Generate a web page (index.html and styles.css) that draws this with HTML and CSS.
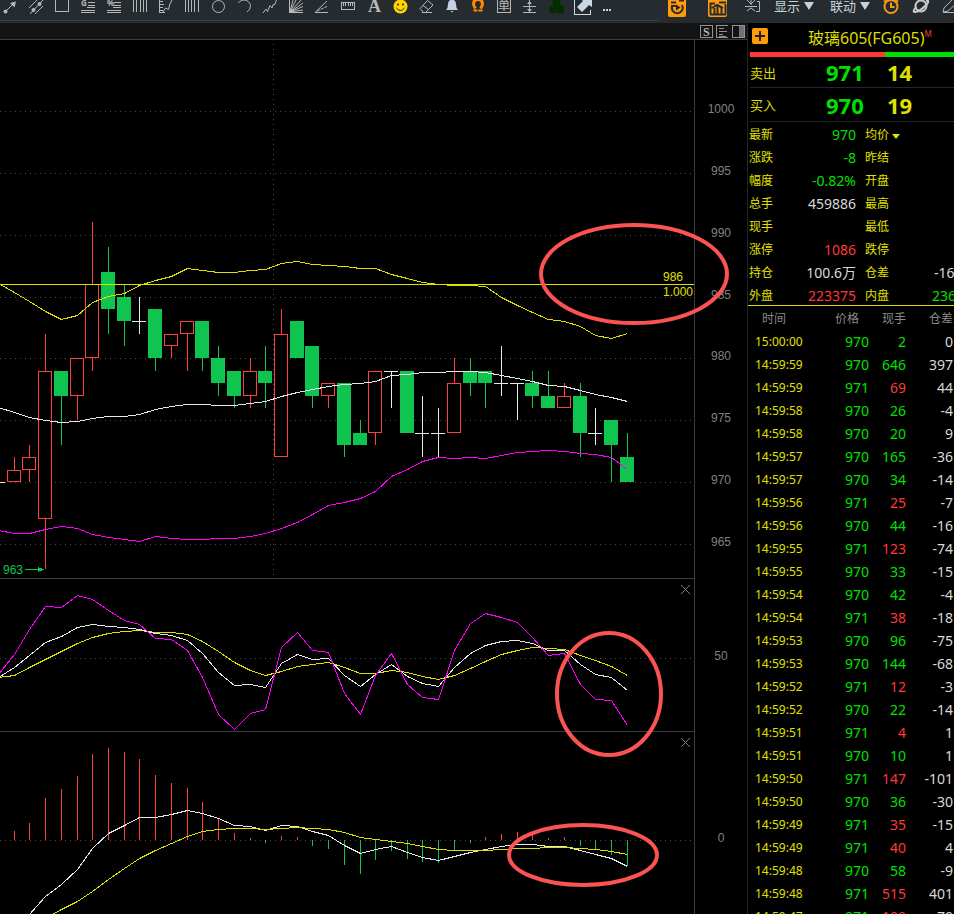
FILE: index.html
```html
<!DOCTYPE html>
<html lang="zh-CN">
<head>
  <meta charset="UTF-8" />
  <meta name="viewport" content="width=device-width, initial-scale=1" />
  <title>玻璃605 (FG605)</title>
  <link rel="stylesheet" href="styles.css">
</head>
<body>

<header class="toolbar">
  <div class="draw-tools">
    <button aria-label="箭头"><svg><circle cx="5.5" cy="14.5" r="2" class="fill"/><path d="M5 15L13 7"/><path d="M16 4.5L14.5 10.5L10 6z" class="fill"/></svg></button>
    <button aria-label="平行线"><svg><path d="M3 11L11 3M4 17L17 3M9 17L17 9"/><circle cx="7.5" cy="13" r="2" class="fill"/><circle cx="13.5" cy="7" r="2" class="fill"/></svg></button>
    <button aria-label="矩形"><svg class="crisp"><rect x="3.5" y="2.5" width="13" height="12"/></svg></button>
    <button aria-label="黄金分割"><svg class="crisp"><path d="M10 5.5h7M10 8.5h7M9 10.5h8M3 13.5h14M3 15.5h14"/><text x="3" y="9" class="tiny">G</text></svg></button>
    <button aria-label="百分比"><svg class="crisp"><path d="M10 5.5h7M10 8.5h7M9 10.5h8M3 13.5h14M3 15.5h14"/><text x="3" y="9" class="tiny">%</text></svg></button>
    <button aria-label="周期线"><svg class="crisp"><path d="M3.5 2v13M6.5 2v13M10.5 2v13M13.5 2v13M16.5 2v13"/></svg></button>
    <button aria-label="测量"><svg><path class="crisp" d="M3.5 2v13.5h5M4 4.5h3M4 7.5h4M4 10.5h3M4 13.5h3"/><path d="M7 15L9.5 11L12.5 12.5L13.5 8L16 3"/></svg></button>
    <button aria-label="斐波那契"><svg class="crisp"><path d="M3.5 2v13M6.5 2v13M9.5 2v13M12.5 2v13M16.5 2v13"/></svg></button>
    <button aria-label="圆"><svg><circle cx="10.5" cy="9.5" r="6"/></svg></button>
    <button aria-label="圆弧"><svg><path d="M4 6C8 1.5 15 2 16.5 8.5Q16.5 13 13 15"/></svg></button>
    <button aria-label="波浪线"><svg><path d="M3 16L6 12L7.5 14.5L10 8.5L12 11L13.5 7L14.5 8L16.5 3"/></svg></button>
    <button aria-label="江恩角度"><svg><path d="M3.5 2v13.500H17M4 15L7 3M4 15L10 3M4 15L15 3M4 15L17 6M4 15L17 9.5M4 15L17 13"/><path d="M3 16v-6l6 6z" class="fill"/></svg></button>
    <button aria-label="速阻线"><svg><path d="M3 15.5h13M3 15.5L15 4"/><path d="M5 14L16 9" stroke-dasharray="3 1"/></svg></button>
    <button aria-label="标尺"><svg class="crisp"><path d="M3.5 5.5h13v7h-13zM5.5 6v3M7.5 6v3M10.5 6v3M12.5 6v3M14.5 6v3"/></svg></button>
    <button aria-label="文字"><svg><text x="4" y="15" class="letter">A</text></svg></button>
    <button aria-label="表情"><svg><circle cx="10.5" cy="9.5" r="7" class="smile"/><circle cx="8" cy="7.5" r="1" class="dark"/><circle cx="13" cy="7.5" r="1" class="dark"/><path d="M6.5 11Q10.5 16 14.500 11" class="mouth"/></svg></button>
    <button aria-label="橡皮"><svg><path d="M4 11.5L11.500 3.500L17 8L9.500 15.500H7.500zM7 8.500L12.500 12.500M6 15.500h10"/></svg></button>
    <button aria-label="提醒"><svg><path class="bell" d="M4 13Q6 11 6 7Q6 3 10 2.500Q14 3 14 7Q14 11 16 13zM8.500 14h3l-1.500 1.500z"/></svg></button>
    <button aria-label="磁铁"><svg><path class="magnet" d="M7.500 11.500Q5.500 9 5.500 6.500Q6 2.500 10 2.500Q14 2.500 14.500 6.500Q14.500 9 12.500 11.500"/><path d="M5.500 13.500h4M10.500 13.500h4" class="magnet foot"/></svg></button>
    <button aria-label="画线下单"><svg><path class="crisp" d="M3.500 0v15.500h13V0"/><text x="4" y="13" class="cjk">单</text></svg></button>
    <button aria-label="水平线"><svg><path class="crisp" d="M3 9.500h13M3 15.500h13M9.500 3v12"/><path d="M7 7h5l-2.500-3zM7 12h5l-2.500 3z" class="fill"/></svg></button>
    <button aria-label="指标"><svg class="clover"><circle cx="10.500" cy="6" r="4"/><circle cx="7" cy="12.500" r="4"/><circle cx="14.500" cy="12.500" r="4"/></svg></button>
    <button aria-label="展开"><svg class="expand"><path class="crisp" d="M2.500 0v17.500h16v-5"/><path class="solid" d="M5 10L11 4L9 2H20V10L17 8L10 15z"/></svg></button>
    <button aria-label="更多"><svg><path class="more" d="M5 13h2M8 13h2M11 13h2"/></svg></button>
  </div>
  <div class="view-tools">
    <button class="boxed" aria-label="回放"><svg><rect x="0" y="0" width="18" height="20" rx="2" class="orange"/><path d="M3 5.500h5M11 3.500h5" class="ink"/><path d="M4 9A5.500 5.500 0 1 0 14 8M4 13v-4h4" class="ink"/><path d="M8 7.500L12.500 10.500L8 13.500z" class="dark"/></svg></button>
    <button class="boxed" aria-label="统计"><svg><rect x="2" y="0" width="19" height="20" rx="2" class="orange"/><path d="M4.500 17.500V6.500H9M13 5.500h7M19.500 17.500V7M8.500 17V11M11.500 17V9M15.500 17V11M4 17.500h16M6 11L11 8L17 11" class="ink"/></svg></button>
    <button aria-label="分栏"><svg><path d="M2 2l5 5l5-5M7 2v6M1 9.500h12M3 14l4-3l4 3M13 4.500h2.500v10H12"/></svg></button>
    <button class="menu">显示<span class="caret"></span></button>
    <button class="menu">联动<span class="caret"></span></button>
    <button aria-label="闹钟"><svg class="clock"><circle cx="9" cy="9.500" r="6.500"/><path d="M9 5.500V10h3.500M2 5l3-3M13 2l3 3"/></svg></button>
    <button aria-label="星球"><svg class="planet"><circle cx="9" cy="9" r="5.500"/><path d="M4 10Q0 15 3 15Q9 14 15 7Q18 3 14 4"/></svg></button>
    <button aria-label="编辑"><svg><path d="M1 15l1-4L11 2l4 4l-9 8zM1 15.500h14"/></svg></button>
  </div>
</header>

<main>
  <section class="charts">
    <div class="tabs">
      <button aria-label="S"><svg class="crisp"><rect x=".5" y=".5" width="12" height="12"/><text x="3" y="11" class="serif">S</text></svg></button>
      <button aria-label="列表"><svg class="crisp"><path d="M12 .5H.5v12H12M3 3.500h5M3 6.500h8M3 9.500h4M3 11.500h7"/></svg></button>
      <button aria-label="侧栏"><svg class="crisp"><rect x=".5" y=".5" width="12" height="12"/><rect x="7" y="1" width="5" height="11" class="fill"/></svg></button>
    </div>

    <div class="panels">
      <div class="panel price">
        <svg class="plot" id="price"></svg>
        <svg class="axis" id="priceAxis"></svg>
      </div>
      <div class="panel kdj">
        <svg class="plot" id="kdj"></svg>
        <svg class="axis"><text x="50%" y="81">50</text></svg>
        <button class="close" aria-label="关闭"><svg><path d="M0 0L9 9M9 0L0 9"/></svg></button>
      </div>
      <div class="panel macd">
        <svg class="plot" id="macd"></svg>
        <svg class="axis"><text x="50%" y="110">0</text></svg>
        <button class="close" aria-label="关闭"><svg><path d="M0 0L9 9M9 0L0 9"/></svg></button>
      </div>
      <svg class="marks">
        <ellipse cx="634" cy="234" rx="93" ry="49"/>
        <ellipse cx="609" cy="654" rx="52" ry="61"/>
        <ellipse cx="583" cy="815" rx="74" ry="30"/>
      </svg>
    </div>
  </section>

  <aside class="quote">
    <div class="title">
      <button class="add" aria-label="添加"><svg><path d="M8 3v10M3 8h10"/></svg></button>
      <h1>玻璃605(FG605)</h1><sup>M</sup>
    </div>
    <div class="ratio"><span></span></div>
    <div class="deal"><span>卖出</span><b>971</b><b class="lots">14</b></div>
    <div class="deal buy"><span>买入</span><b>970</b><b class="lots">19</b></div>

    <table class="stats">
      <tr><th>最新</th><td class="dn">970</td><th>均价<span class="caret"></span></th><td></td></tr>
      <tr><th>涨跌</th><td class="dn">-8</td><th>昨结</th><td></td></tr>
      <tr><th>幅度</th><td class="dn">-0.82%</td><th>开盘</th><td></td></tr>
      <tr><th>总手</th><td>459886</td><th>最高</th><td></td></tr>
      <tr><th>现手</th><td></td><th>最低</th><td></td></tr>
      <tr><th>涨停</th><td class="up">1086</td><th>跌停</th><td></td></tr>
      <tr><th>持仓</th><td>100.6万</th><th>仓差</th><td class="net">-16</td></tr>
      <tr><th>外盘</th><td class="up">223375</td><th>内盘</th><td class="dn">236</td></tr>
    </table>

    <table class="ticks">
      <thead>
        <tr><th>时间</th><th>价格</th><th>现手</th><th>仓差</th></tr>
      </thead>
      <tbody id="ticks"></tbody>
    </table>
  </aside>
</main>

<script src="chart.js"></script>
</body>
</html>
```
FILE: styles.css
```css
* { box-sizing: border-box; }
body {
  margin: 0;
  height: 100vh;
  display: flex;
  flex-direction: column;
  overflow: hidden;
  background: #000;
  color: #d8d8d8;
  font-family: "Noto Sans", "Noto Sans CJK SC", sans-serif;
  font-size: 14px;
}
button {
  padding: 0;
  border: 0;
  background: none;
  color: inherit;
  font: inherit;
  flex: none;
}
button svg {
  display: block;
  width: 18px;
  height: 18px;
  overflow: visible;
  fill: none;
  stroke: #b4b8ba;
}
svg .fill { fill: #b4b8ba; stroke: none; }
.crisp { shape-rendering: crispEdges; }
svg text { stroke: none; fill: #b4b8ba; }

/* toolbar */
.toolbar {
  flex: none;
  height: 23px;
  display: flex;
  align-items: flex-start;
  background: #262b2f;
  overflow: hidden;
}
.draw-tools {
  flex: 1;
  height: 21px;
  padding-bottom: 8px;
  margin-left: -4px;
  border-bottom: 1px solid #3a4147;
  display: flex;
  align-items: center;
}
.draw-tools button {
  width: 26px;
  display: flex;
  justify-content: center;
}
.view-tools {
  flex: none;
  width: 295px;
  height: 12px;
  padding-left: 9px;
  display: flex;
  align-items: center;
  gap: 12px;
}
.boxed { margin-right: 8px; }
.menu {
  width: 40px;
  display: flex;
  align-items: center;
  justify-content: space-between;
  line-height: 18px;
  font-size: 13px;
  color: #c4d4da;
}
.menu + .menu { margin-left: 4px; }
.caret {
  border: 5px solid transparent;
  border-top: 8px solid #c4d4da;
  border-bottom: 0;
}
.tiny { font-size: 8px; font-weight: bold; }
.letter { font: bold 18px "Liberation Serif", serif; }
.cjk { font-size: 12px; }
.serif { font: bold 12px "Liberation Serif", serif; }
.smile { fill: #ffd400; stroke: none; }
.dark { fill: #222; stroke: none; }
.mouth { stroke: #222; }
.bell { fill: #c4cfe4; stroke: none; }
.magnet { stroke: #ff8c00; stroke-width: 3; }
.magnet.foot { stroke-width: 2; }
.clover { fill: #032c03; stroke: none; }
.expand { stroke: #c8d8e4; }
.solid { fill: #c8d8e4; stroke: none; }
.more { stroke: #c4d4ec; stroke-width: 2; }
.orange { fill: #ff9c0c; stroke: none; }
.ink { stroke: #2a2d30; stroke-width: 2; }
.clock { stroke: #f09a1c; stroke-width: 2; }
.planet { stroke: #c8cccf; stroke-width: 2; }

main {
  flex: 1;
  min-height: 0;
  display: flex;
}

/* charts */
.charts {
  flex: 1;
  min-width: 0;
  display: flex;
  flex-direction: column;
}
.tabs {
  flex: none;
  height: 17px;
  padding: 1px 2px 0 0;
  display: flex;
  justify-content: flex-end;
  gap: 3px;
  background: #141414;
  border-bottom: 1px solid #3a3c3e;
}
.tabs svg {
  width: 13px;
  height: 13px;
  stroke: #909294;
}
.tabs .fill { fill: #707274; }
.panels {
  flex: 1;
  position: relative;
  display: flex;
  flex-direction: column;
  overflow: hidden;
}
.panel {
  flex: none;
  position: relative;
  display: grid;
  grid-template-columns: 1fr 52px;
}
.price { height: 539px; }
.kdj { height: 153px; }
.macd { flex: 1; }
.plot {
  width: 100%;
  height: 100%;
  border-right: 1px solid #3a3e44;
  border-bottom: 1px solid #3a3e44;
  fill: none;
  shape-rendering: crispEdges;
}
.macd .plot { border-bottom: 0; }
.axis { width: 100%; height: 100%; }
.axis text {
  text-anchor: middle;
  fill: #808080;
}
.axis text, .plot text { font: 12px "Liberation Sans", sans-serif; }
.plot .grid { stroke: #484848; stroke-dasharray: 1 4; }
.red { stroke: #ff4040; }
.green { stroke: #10c450; }
.body-dn { fill: #10c450; }
.body-up { fill: #000; stroke: #ff4040; }
.white { stroke: #e8e8e8; }
.yellow { stroke: #e0e000; }
.magenta { stroke: #ff00ff; }
.plot .t-yellow { fill: #e0e000; }
.plot .t-green { fill: #10c450; }
.close {
  position: absolute;
  top: 6px;
  right: 57px;
}
.close svg { width: 9px; height: 9px; stroke: #808080; }
.marks {
  position: absolute;
  inset: 0;
  width: 100%;
  height: 100%;
  pointer-events: none;
}
.marks ellipse { fill: none; stroke: #fb5252; stroke-width: 4; }

/* quote */
.quote {
  flex: none;
  width: 207px;
  border-left: 1px solid #24242e;
  overflow: hidden;
}
.title {
  height: 29px;
  padding-left: 4px;
  display: flex;
  align-items: center;
}
.add {
  margin-bottom: 3px;
  border-radius: 2px;
  background: #ff9c0c;
}
.add svg { width: 16px; height: 16px; stroke: #222; stroke-width: 2; }
.title h1 {
  margin: 0 0 0 40px;
  font-size: 16px;
  font-weight: normal;
  line-height: 24px;
  color: #dcdc00;
}
.title sup {
  align-self: flex-start;
  margin-top: 6px;
  font-size: 8px;
  line-height: 10px;
  color: #ff3838;
}
.ratio {
  height: 5px;
  margin-left: 2px;
  background: #00e000;
}
.ratio span {
  display: block;
  width: 66%;
  height: 5px;
  background: #ff3838;
}
.deal {
  height: 31px;
  margin-left: 2px;
  border-bottom: 1px solid #24242e;
  display: grid;
  grid-template-columns: 76px 61px 1fr;
  align-items: center;
  color: #dcdc00;
}
.deal.buy { height: 34px; }
.deal span { font-size: 13px; }
.deal b {
  font-size: 22px;
  line-height: 28px;
  color: #00e000;
}
.deal .lots { color: #e0e000; }
table {
  border-collapse: collapse;
  table-layout: fixed;
  width: 206px;
}
th, td {
  height: 23px;
  padding: 2px 0 0;
  line-height: 21px;
  white-space: nowrap;
}
th { font-size: 12px; font-weight: normal; text-align: left; }
td { text-align: right; }
.up { color: #ff3838; }
.dn { color: #00e000; }
.stats th { width: 50px; padding-left: 1px; color: #e0e000; }
.stats td { width: 58px; }
.stats td + th { width: 76px; padding-left: 9px; }
.stats th:nth-child(3) ~ td { width: 22px; text-align: left; }
.stats th:nth-child(3) ~ .net { padding-left: 2px; }
.stats .caret {
  display: inline-block;
  margin-left: 3px;
  border-width: 5px 4px 0;
  border-top-color: #e0e000;
}
.ticks { border-top: 1px solid #e0e000; margin-top: -1px; }
.ticks th { width: 47px; text-align: right; color: #8a8a8a; }
.ticks th:nth-child(1) { width: 64px; padding-left: 14px; text-align: left; }
.ticks th:nth-child(2) { width: 57px; padding-right: 10px; }
.ticks th:nth-child(3) { width: 37px; }
.ticks th:nth-child(4) { width: 48px; padding-right: 1px; }
.ticks td:nth-child(1) { padding-left: 7px; text-align: left; font-size: 12px; color: #e0e000; }
.ticks td:nth-child(4) { padding-right: 1px; }
```
FILE: chart.js
```js
// open, close, high, low
const bars = [
  [970,971,972,970],[971,972,973,970],[967,979,982,963],[979,977,979,973],[977,980,980,975],
  [980,986,991,979],[987,984,989,982],[985,983,986,981],[983,983,985,982],[984,980,984,979],
  [981,982,982,980],[982,983,983,979],[983,980,983,979],[980,978,981,977],[979,977,979,976],
  [977,979,980,976],[979,978,981,976],[972,982,984,972],[983,980,983,980],[981,977,981,976],
  [977,978,978,976],[978,973,978,972],[974,973,975,973],[974,979,979,973],[979,979,979,976],
  [979,974,979,974],[974,974,977,972],[974,974,976,972],[974,978,980,974],[979,978,980,977],
  [979,978,979,976],[978,978,981,977],[978,978,978,975],[978,977,979,976],[977,976,979,976],
  [976,977,978,976],[977,974,978,972],[974,974,976,973],[975,973,975,970],[972,970,974,970]
];

// line series, one value per bar, starting one bar before the first
const upper = [243,252,261,271,279,275,262,256,253,245,240,236,228,230,232,232,230,229,223,221,224,225,226,228,228,234,238,242,244,245,245,246,257,265,272,279,281,286,295,298,293];
const mid = [367,372,377,380,382,381,378,376,376,374,369,366,364,364,365,365,363,361,356,352,349,346,344,343,341,335,334,332,332,331,331,332,335,338,341,345,346,350,354,357,361];
const lower = [490,493,493,489,486,488,494,497,499,501,496,498,499,499,498,498,496,493,488,482,474,465,462,458,451,436,429,421,417,418,417,418,415,412,411,410,411,413,414,417,429];
const k = [98,88,76,63,57,48,45,47,48,50,54,56,61,74,93,106,105,108,84,75,80,79,96,107,95,85,97,104,107,88,74,66,62,61,64,71,71,85,95,98,111];
const d = [98,96,88,80,72,64,58,54,52,51,53,53,55,62,72,83,91,96,92,87,85,83,88,94,94,91,93,97,100,96,89,82,75,71,68,69,70,76,81,87,96];
const j = [95,75,50,27,28,16,20,31,41,45,59,60,71,98,135,150,134,130,68,53,71,73,114,135,96,74,105,118,120,71,44,34,38,43,58,76,74,105,120,121,146];
const dif = [230,208,182,164,152,137,116,101,93,85,85,82,78,81,86,93,94,98,93,94,99,103,113,121,117,114,120,125,128,124,120,117,114,112,112,114,114,118,122,126,134];
const dea = [220,205,195,186,177,169,159,147,136,126,118,111,104,99,97,96,96,97,96,95,96,97,100,105,107,109,111,114,117,118,118,118,117,116,116,115,115,116,117,119,122];
const hist = [9,17,42,51,64,86,92,88,81,65,57,52,38,22,7,2,-3,4,3,-6,-9,-25,-34,-20,-11,-19,-22,-23,-10,-3,3,6,8,5,2,3,-6,-10,-15,-26];

const x = i => Math.floor(14.2 + i * 15.72);
const y = p => Math.round(318.4 + (980 - p) * 12.38);

function grid(v) {
  return `<line class="grid" x1="0" x2="100%" y1="${v + 0.5}" y2="${v + 0.5}"/>`;
}

function line(data, cls) {
  const pts = data.map((v, i) => `${x(i - 1) + 0.5},${v + 0.5}`).join(" ");
  return `<polyline class="${cls}" points="${pts}"/>`;
}

function vline(i, from, to, cls) {
  return `<line class="${cls}" x1="${x(i) + 0.5}" x2="${x(i) + 0.5}" y1="${from}" y2="${to}"/>`;
}

function candle([open, close, high, low], i) {
  const top = y(Math.max(open, close));
  const bottom = y(Math.min(open, close));
  if (open === close) {
    return vline(i, y(high), y(low), "white") +
      `<line class="white" x1="${x(i) - 7}" x2="${x(i) + 7}" y1="${top + 0.5}" y2="${top + 0.5}"/>`;
  }
  if (close > open) {
    return vline(i, y(high), y(low), "red") +
      `<rect class="body-up" x="${x(i) - 6.5}" y="${top + 0.5}" width="13" height="${bottom - top - 1}"/>`;
  }
  return vline(i, y(high), y(low), "green") +
    `<rect class="body-dn" x="${x(i) - 7}" y="${top}" width="14" height="${bottom - top}"/>`;
}

const levels = [1000, 995, 990, 985, 980, 975, 970, 965];
document.getElementById("price").innerHTML =
  levels.map(p => grid(y(p))).join("") +
  `<line class="grid" x1="273.5" x2="273.5" y1="4" y2="538"/>` +
  `<line class="white" x1="0" x2="5" y1="442.5" y2="442.5"/>` +
  bars.map(candle).join("") +
  line(upper, "yellow") + line(mid, "white") + line(lower, "magenta") +
  `<line class="yellow" x1="0" x2="100%" y1="244.5" y2="244.5"/>
  <text class="t-yellow" x="663" y="241">986</text>
  <text class="t-yellow" x="663" y="256">1.000</text>
  <text class="t-green" x="3" y="534">963</text>
  <path class="green" d="M25 529.5h18"/>
  <path class="body-dn" d="M38 527v5l6-2.5z"/>`;
document.getElementById("priceAxis").innerHTML =
  levels.map(p => `<text x="50%" y="${y(p) + 2}">${p}</text>`).join("");

document.getElementById("kdj").innerHTML =
  grid(79) + line(d, "yellow") + line(k, "white") + line(j, "magenta");

document.getElementById("macd").innerHTML =
  grid(108) +
  hist.map((h, i) => vline(i, 108, 108 - h, h > 0 ? "red" : "green")).join("") +
  line(dif, "white") + line(dea, "yellow");

// time, price, lots, lots colour, position change
const ticks = [
  ["15:00:00",970,2,"dn",0],["14:59:59",970,646,"dn",397],["14:59:59",971,69,"up",44],
  ["14:59:58",970,26,"dn",-4],["14:59:58",970,20,"dn",9],["14:59:57",970,165,"dn",-36],
  ["14:59:57",970,34,"dn",-14],["14:59:56",971,25,"up",-7],["14:59:56",970,44,"dn",-16],
  ["14:59:55",971,123,"up",-74],["14:59:55",970,33,"dn",-15],["14:59:54",970,42,"dn",-4],
  ["14:59:54",971,38,"up",-18],["14:59:53",970,96,"dn",-75],["14:59:53",970,144,"dn",-68],
  ["14:59:52",971,12,"up",-3],["14:59:52",970,22,"dn",-14],["14:59:51",971,4,"up",1],
  ["14:59:51",970,10,"dn",1],["14:59:50",971,147,"up",-101],["14:59:50",970,36,"dn",-30],
  ["14:59:49",971,35,"up",-15],["14:59:49",971,40,"up",4],["14:59:48",970,58,"dn",-9],
  ["14:59:48",971,515,"up",401],["14:59:47",971,199,"up",70]
];
document.getElementById("ticks").innerHTML = ticks.map(t =>
  `<tr><td>${t[0]}</td><td class="dn">${t[1]}</td><td class="${t[3]}">${t[2]}</td><td>${t[4]}</td></tr>`
).join("");
```
